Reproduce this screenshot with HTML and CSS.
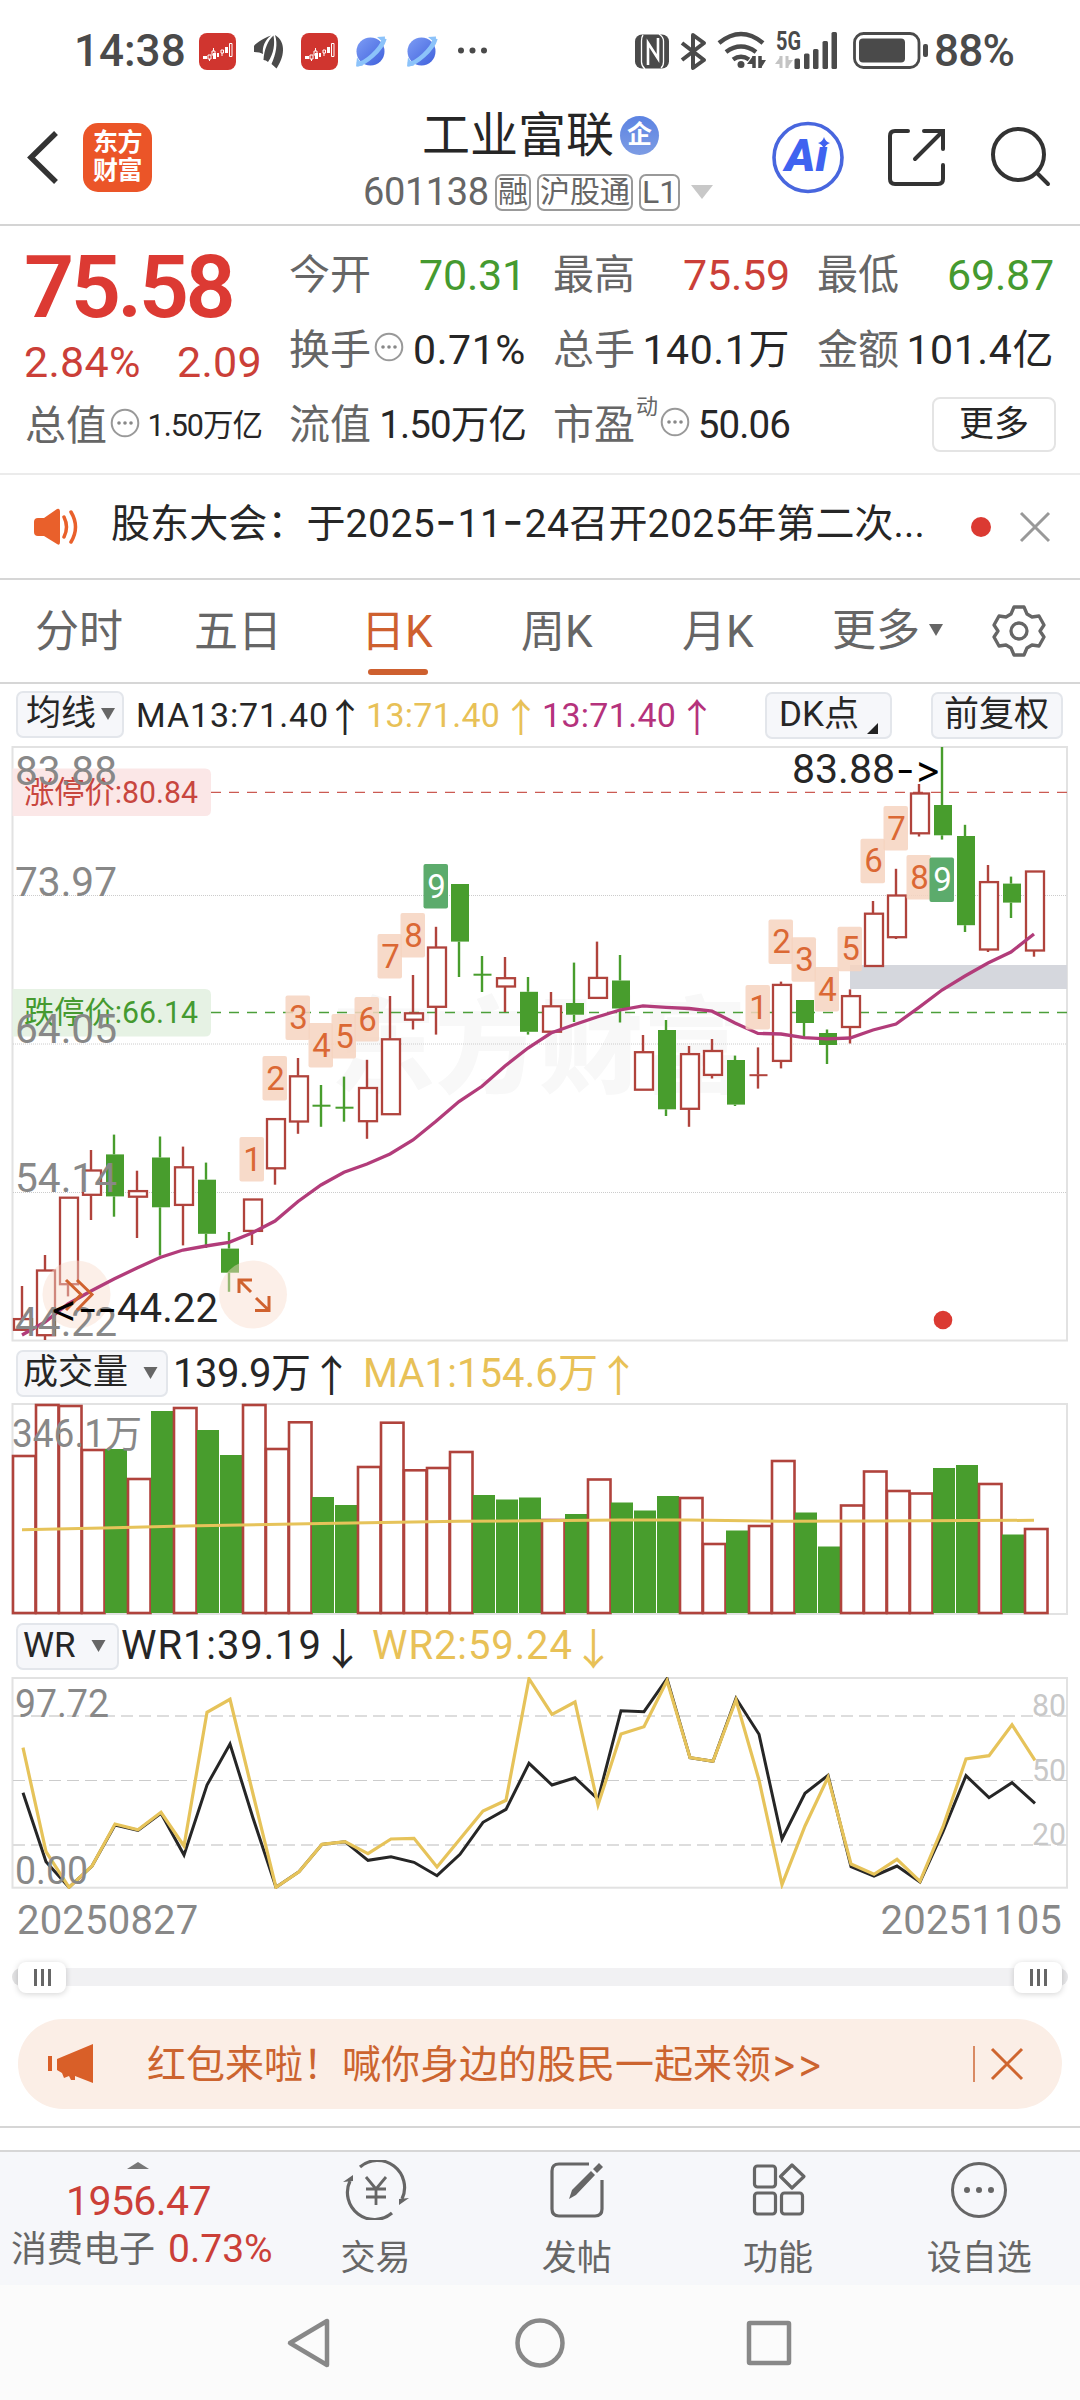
FILE: index.html
```html
<!DOCTYPE html>
<html lang="zh-CN">
<head>
<meta charset="utf-8">
<title>工业富联 601138</title>
<link rel="stylesheet" href="styles.css">
</head>
<body>
<svg width="0" height="0" class="defs">
  <defs>
    <linearGradient id="planet" x1="0" y1="0" x2="1" y2="1"><stop offset="0" stop-color="#7d9df5"/><stop offset="1" stop-color="#3f60dc"/></linearGradient>
    <g id="app-red">
      <rect width="37" height="37" rx="8" fill="#d0352f"/>
      <path d="M4 23h4v3H4zM14 20h3v6h-3zM18 20h2v4h-2zM26 14h3v6h-3z" fill="#fff"/>
      <path d="M9 22h3v4H9zM13 18h3v4h-3zM22 17h2.500v3H22zM30.500 10.500h2.500v13h-2.500zM14.500 15v3M23 20v3M10.500 26v2" fill="none" stroke="#fff" stroke-width="1"/>
    </g>
    <g id="app-planet">
      <circle cx="14.500" cy="15" r="14" fill="url(#planet)"/>
      <path d="M1 28C9 27 25 14 28.500 2" fill="none" stroke="#8cc3fa" stroke-width="4.500"/>
      <path d="M1 21l-1 9 7-1M21 0.500l8-.5-.5 7" fill="#8cc3fa"/>
    </g>
    <g id="more-dots">
      <circle cx="15" cy="15" r="13.300" fill="none" stroke="#999" stroke-width="2"/>
      <circle cx="9" cy="15" r="1.800" fill="#888"/><circle cx="15" cy="15" r="1.800" fill="#888"/><circle cx="21" cy="15" r="1.800" fill="#888"/>
    </g>
  </defs>
</svg>

<div class="status">
  <span class="clock">14:38</span>
  <svg class="status-left" width="300" height="50" viewBox="195 25 300 50">
    <use href="#app-red" x="199" y="33"/>
    <path d="M271 35.500C262 39 255 44 254 46V52Q260 52 263 54C262 47 265 40 271 35.500zM273.500 35.500C268 40 264 50 263.500 60Q266 60 268 62C274 53 275 44 273.500 35.500zM275 35C278 44 276 54 271.500 64L276.500 68.500C284 58 287 42 275 35z"/>
    <use href="#app-red" x="301" y="33"/>
    <use href="#app-planet" x="356" y="36.500"/>
    <use href="#app-planet" x="407" y="36.500"/>
    <circle cx="461" cy="50.500" r="3"/><circle cx="472.500" cy="50.500" r="3"/><circle cx="484" cy="50.500" r="3"/>
  </svg>
  <svg class="status-right" width="300" height="50" viewBox="630 25 300 50">
    <rect x="635" y="34.500" width="34" height="34" rx="7"/>
    <path d="M643 35Q641.500 37 641.500 41V62Q641.500 66 645 69M661 68Q663.500 66 663.500 62V41Q663.500 37 659 34" fill="none" stroke="#fff" stroke-width="1.300"/>
    <path d="M648 65V43L658 58.500V38" fill="none" stroke="#fff" stroke-width="2.600"/>
    <path d="M682 43L704 60L693 68V35L704 43L682 60" fill="none" stroke="#4a4a4a" stroke-width="4" stroke-linejoin="round"/>
    <path d="M719 43Q741 25 763 43M726 52Q741 41 756 52" fill="none" stroke="#4a4a4a" stroke-width="4.500"/>
    <path d="M733 59.500Q741 54 749 59.500" fill="none" stroke="#4a4a4a" stroke-width="4.500"/>
    <circle cx="741" cy="64.500" r="3.500"/>
    <path d="M754 56v12M760 56v12" stroke="#4a4a4a" stroke-width="3.500"/><path d="M747 64l6-8v8zM761 68v-8h5z"/>
    <text x="776" y="50" class="net" textLength="25" lengthAdjust="spacingAndGlyphs">5G</text>
    <path d="M781 56v12M787 56v12" stroke="#c4c4c4" stroke-width="3"/><path d="M775 64l6-8v8zM787 68v-8h6z" fill="#c4c4c4"/>
    <rect x="794.500" y="58.500" width="5.500" height="10.500" rx="1.500"/><rect x="804" y="53.500" width="5.500" height="15.500" rx="1.500"/><rect x="813" y="49" width="5.500" height="20" rx="1.500"/><rect x="822.500" y="41" width="5.500" height="28" rx="1.500"/><rect x="831.500" y="32" width="5.500" height="37" rx="1.500"/>
    <rect x="854.500" y="33.500" width="64.500" height="34" rx="9" fill="none" stroke="#4a4a4a" stroke-width="2.800"/>
    <rect x="859" y="38.500" width="46" height="24" rx="4"/><rect x="923" y="44" width="5" height="13" rx="2"/>
  </svg>
  <span class="battery">88%</span>
</div>

<header class="header">
  <svg class="back" width="34" height="60" viewBox="26 127 34 60"><path d="M56 133L31 157.500L56 182" fill="none" stroke="#333" stroke-width="5.500"/></svg>
  <div class="logo"><span>东方</span><span>财富</span></div>
  <div class="title">
    <div class="name"><b>工业富联</b><i>企</i></div>
    <div class="code"><span>601138</span><em>融</em><em>沪股通</em><em class="level">L1</em><svg width="22" height="14" viewBox="0 0 22 14"><path d="M0 0h22L11 14z" fill="#c8c8c8"/></svg></div>
  </div>
  <svg class="actions" width="290" height="80" viewBox="770 117 290 80">
    <circle cx="808" cy="157.500" r="34" fill="none" stroke="#4866de" stroke-width="3.600"/>
    <path d="M824 137q1.500 5 6 6q-4.500 1.500-6 6q-1.500-4.500-6-6q4.500-1 6-6z" fill="#3f63f0"/>
    <text class="ai" x="785" y="171" textLength="43" lengthAdjust="spacingAndGlyphs">Aı</text>
    <g fill="none" stroke="#333" stroke-width="4" stroke-linecap="round">
      <path d="M908 131H895Q890 131 890 136V179Q890 184 895 184H938Q943 184 943 179V165M924 131H943V149M942 132L915 159"/>
      <circle cx="1018.500" cy="154.500" r="25.500"/><path d="M1037 173L1048 184"/>
    </g>
  </svg>
</header>

<section class="quote">
  <div class="lead">
    <div class="price">75.58</div>
    <div class="change"><span>2.84%</span><span>2.09</span></div>
    <div class="cell total"><label>总值</label><svg class="dots"><use href="#more-dots"/></svg><span class="small">1.50万亿</span></div>
  </div>
  <div class="cells">
    <div class="cell"><label>今开</label><span class="big green">70.31</span></div>
    <div class="cell"><label>最高</label><span class="big red">75.59</span></div>
    <div class="cell"><label>最低</label><span class="big green">69.87</span></div>
    <div class="cell"><label>换手</label><svg class="dots"><use href="#more-dots"/></svg><span>0.71%</span></div>
    <div class="cell"><label>总手</label><span>140.1万</span></div>
    <div class="cell"><label>金额</label><span>101.4亿</span></div>
    <div class="cell"><label>流值</label><span class="mid">1.50万亿</span></div>
    <div class="cell"><label>市盈<sup>动</sup></label><svg class="dots pe"><use href="#more-dots"/></svg><span class="mid">50.06</span></div>
    <div class="cell"><button class="more">更多</button></div>
  </div>
</section>

<section class="news">
  <svg width="48" height="40" viewBox="32 506 48 40"><path d="M34 521Q34 517 38 517H44L57 508Q60 507 60 511V541Q60 545 57 543L44 535H38Q34 535 34 531z" fill="#e9602b"/><path d="M64 516q5 10 0 20M71 511q9 15 0 30" fill="none" stroke="#e9602b" stroke-width="3.500" stroke-linecap="round"/></svg>
  <p>股东大会：于<span class="num">2025<b>-</b>11<b>-</b>24</span>召开<span class="num">2025</span>年第二次...</p>
  <i class="red-dot"></i>
  <svg width="32" height="32" viewBox="0 0 32 32"><path d="M2 2L30 30M30 2L2 30" stroke="#999" stroke-width="3"/></svg>
</section>

<nav class="tabs">
  <a class="t1">分时</a><a class="t2">五日</a><a class="t3 active">日K</a><a class="t4">周K</a><a class="t5">月K</a><a class="t6">更多<svg width="14" height="12" viewBox="0 0 14 12"><path d="M0 0h14L7 12z" fill="#666"/></svg></a>
  <svg class="gear" width="54" height="54" viewBox="-27 -27 54 54"><path d="M-5 -24H5L8 -17L13 -14L20 -15L25 -6L21 0L25 6L20 15L13 14L8 17L5 24H-5L-8 17L-13 14L-20 15L-25 6L-21 0L-25 -6L-20 -15L-13 -14L-8 -17z" fill="none" stroke="#666" stroke-width="3.300" stroke-linejoin="round"/><circle r="8" fill="none" stroke="#666" stroke-width="3.300"/></svg>
</nav>

<div class="bar ma">
  <button class="chip c-ma">均线<svg width="14" height="12" viewBox="0 0 14 12"><path d="M0 0h14L7 12z" fill="#666"/></svg></button>
  <span class="m1">MA13:71.40</span><span class="up">↑</span><span class="m2 gold">13:71.40</span><span class="up gold">↑</span><span class="m2 pink">13:71.40</span><span class="up pink">↑</span>
  <button class="chip c-dk">DK点<svg width="11" height="11" viewBox="0 0 11 11"><path d="M11 0v11H0z" fill="#222"/></svg></button>
  <button class="chip c-fq">前复权</button>
</div>
<svg id="kline" class="chart" width="1080" height="596" viewBox="0 6 1080 596"></svg>

<div class="bar vol">
  <button class="chip c-vol">成交量<svg width="15" height="12" viewBox="0 0 14 12"><path d="M0 0h14L7 12z" fill="#666"/></svg></button>
  <span class="v1">139.9万</span><span class="up">↑</span><span class="v2 gold">MA1:154.6万</span><span class="up gold">↑</span>
</div>
<svg id="volume" class="chart" width="1080" height="213" viewBox="0 63 1080 213"></svg>

<div class="bar wr">
  <button class="chip c-wr">WR<svg width="15" height="12" viewBox="0 0 14 12"><path d="M0 0h14L7 12z" fill="#666"/></svg></button>
  <span class="w1">WR1:39.19</span><span class="up">↓</span><span class="w2 gold">WR2:59.24</span><span class="up gold">↓</span>
</div>
<svg id="wr" class="chart" width="1080" height="212" viewBox="0 67 1080 212"></svg>

<div class="dates"><span>20250827</span><span>20251105</span></div>
<div class="slider"><div class="track"><i class="thumb"><b></b><b></b><b></b></i><i class="thumb end"><b></b><b></b><b></b></i></div></div>

<div class="promo">
  <svg width="46" height="42" viewBox="47 2043 46 42"><path d="M48 2056h4v15h-4zM57 2059L93 2044V2083L75 2076V2080H71L69 2076L64 2078L62 2073L57 2070z" fill="#d95f28"/></svg>
  <p>红包来啦！喊你身边的股民一起来领<span>&gt;&gt;</span></p>
  <i></i>
  <svg width="34" height="34" viewBox="0 0 34 34"><path d="M2 2L32 32M32 2L2 32" stroke="#cf652f" stroke-width="3"/></svg>
</div>

<footer class="dock">
  <div class="index">
    <svg width="22" height="7" viewBox="0 0 22 7"><path d="M0 7L11 0L22 7z" fill="#777"/></svg>
    <strong>1956.47</strong>
    <p>消费电子<span>0.73%</span></p>
  </div>
  <a><svg width="70" height="60" viewBox="-35 -30 70 60"><g fill="none" stroke="#666" stroke-width="3.200"><path d="M-16 -23A27 27 0 0 1 26 9M16 23A27 27 0 0 1 -26 -9"/><path d="M-10 -13L0 -1L10 -13M-10 -1H10M-10 7H10M0 -1V15" stroke-width="2.800"/></g><path d="M-33 -8l10-7v6zM33 8l-10 7V9z" fill="#666"/></svg><span>交易</span></a>
  <a><svg width="70" height="60" viewBox="-35 -30 70 60"><path d="M12 -26H-18Q-25 -26 -25 -19V19Q-25 26 -18 26H18Q25 26 25 19V-10" fill="none" stroke="#666" stroke-width="3.200"/><path d="M-8 9L-5 0L14 -19L18 -15L-1 5zM16 -21L22 -27L26 -23L20 -17z" fill="#666"/></svg><span>发帖</span></a>
  <a><svg width="70" height="60" viewBox="-35 -30 70 60"><g fill="none" stroke="#666" stroke-width="3.200"><rect x="-23.500" y="-24" width="21" height="21" rx="3"/><rect x="-23.500" y="3" width="21" height="21" rx="3"/><rect x="3.500" y="3" width="21" height="21" rx="3"/><path d="M14 -25L26 -13.500L14 -2L2.500 -13.500z" stroke-linejoin="round"/></g></svg><span>功能</span></a>
  <a><svg width="70" height="60" viewBox="-35 -30 70 60"><circle r="26.500" fill="none" stroke="#666" stroke-width="3"/><g fill="#666"><circle cx="-12" r="3"/><circle r="3"/><circle cx="12" r="3"/></g></svg><span>设自选</span></a>
</footer>

<div class="sysnav">
  <svg width="520" height="60" viewBox="280 2313 520 60"><g fill="none" stroke="#888" stroke-width="4.500" stroke-linejoin="round"><path d="M327 2321V2365L290 2343z"/><circle cx="540" cy="2343" r="22.500"/><rect x="749" y="2323" width="40" height="40" rx="1"/></g></svg>
</div>
<script src="charts.js"></script>
</body>
</html>
```
FILE: styles.css
```css
* { box-sizing: border-box; }
html, body { margin: 0; padding: 0; }
body {
  width: 1080px; height: 2400px; overflow: hidden; background: #fff; color: #262626;
  font-family: Roboto, "Noto Sans CJK SC", sans-serif; font-size: 40px;
}
svg { display: block; flex: none; }
.defs { position: absolute; }
p { margin: 0; }
i, em { font-style: normal; }
button { font: inherit; color: inherit; margin: 0; padding: 0; }
.red { color: #cb3f38; }
.green { color: #459a30; }
.gold { color: #e8c157; }
.pink { color: #b5327c; }

.status { height: 100px; display: flex; padding: 0 0 0 74px; color: #4a4a4a; font-weight: 500; font-size: 44px; line-height: 102px; }
.clock { width: 121px; letter-spacing: 0; white-space: nowrap; }
.status svg { margin-top: 25px; fill: #4a4a4a; }
.status-right { margin-left: 135px; }
.battery { margin-left: 4px; letter-spacing: -0.7px; }
.net { font-size: 25px; font-weight: 700; }

.header { height: 126px; border-bottom: 2px solid #d4d4d4; display: flex; padding-left: 26px; }
.back { margin-top: 27px; }
.logo { margin: 23px 0 0 23px; width: 69px; height: 69px; border-radius: 15px; background: #eb5528; color: #fff; font-size: 25px; line-height: 28px; font-weight: 700; text-align: center; padding-top: 6px; letter-spacing: -0.5px; }
.logo span { display: block; }
.title { margin-left: 211px; width: 407px; }
.name { display: flex; height: 71px; padding: 0 0 0 59px; line-height: 71px; }
.name b { font-weight: 400; font-size: 48px; width: 198px; }
.name i { width: 39px; height: 39px; margin-top: 16px; border-radius: 50%; background: linear-gradient(#5c83e2, #7d9ce4); color: #fff; font-size: 25px; font-weight: 700; line-height: 38px; text-align: center; }
.code { display: flex; height: 42px; align-items: center; color: #666; font-size: 38px; }
.code span { width: 132px; letter-spacing: -0.4px; }
.code em { border: 2px solid #999; border-radius: 7px; height: 37px; width: 36px; margin-right: 6px; font-size: 30px; line-height: 32px; text-align: center; white-space: nowrap; }
.code em:nth-of-type(2) { width: 96px; }
.code em.level { width: 41px; margin-right: 11px; font-size: 32px; }
.actions { margin-top: 17px; }
.ai { font: italic 900 44px Roboto, sans-serif; fill: #3f63f0; }

.quote { height: 249px; border-bottom: 2px solid #ebebeb; display: flex; padding: 11px 26px 0 25px; gap: 27px; }
.lead { width: 237px; }
.price { height: 99px; line-height: 99px; font-size: 88px; font-weight: 600; letter-spacing: -3.6px; color: #dc3a33; margin-left: -1px; }
.change { display: flex; justify-content: space-between; height: 52px; line-height: 52px; font-size: 43px; letter-spacing: 0.3px; color: #cb3f38; margin-left: -1px; }
.cells { flex: 1; display: grid; grid-template-columns: repeat(3, 237px); grid-auto-rows: 75px; column-gap: 27px; }
.cell { display: flex; height: 75px; align-items: center; font-size: 41px; line-height: 78px; white-space: nowrap; }
.cell label { color: #666; font-size: 41px; position: relative; }
.cell > span { margin-left: auto; letter-spacing: 0.6px; }
.cell .big { font-size: 43px; letter-spacing: -0.2px; }
.cell .mid { font-size: 38.500px; letter-spacing: -0.9px; }
.cell .small { font-size: 30.500px; letter-spacing: -1px; }
.cell sup { position: absolute; left: 83px; top: 10px; font-size: 22px; line-height: 22px; }
.dots { width: 30px; height: 30px; margin: -5px 0 0 3px; }
.dots.pe { margin-left: 25px; }
.more { margin: 0 -2px 0 auto; width: 124px; height: 55px; border: 2px solid #e4e4e4; border-radius: 8px; background: #fff; font-size: 35px; line-height: 50px; }

.news { height: 105px; border-bottom: 2px solid #d6d6d6; display: flex; align-items: center; padding: 0 29px 0 32px; }
.news p { width: 869px; padding-left: 31px; font-size: 39px; line-height: 60px; margin-top: -6px; white-space: nowrap; letter-spacing: 0.1px; }
.num { letter-spacing: 0.5px; }
.num b { font-family: Inter, sans-serif; font-weight: 400; font-size: 46px; line-height: 0; letter-spacing: 1px; }
.red-dot { width: 20px; height: 20px; border-radius: 50%; background: #db3a32; margin: 0 28px 0 23px; }

.tabs { height: 104px; border-bottom: 2px solid #d6d6d6; display: flex; padding-left: 35px; color: #666; font-size: 44px; line-height: 105px; white-space: nowrap; }
.tabs a { height: 102px; }
.t1 { width: 159px; }
.t2 { width: 167px; }
.t3 { width: 160px; }
.t4 { width: 161px; }
.t5 { width: 150px; }
.t6 { width: 160px; display: flex; align-items: center; }
.t6 svg { margin-left: 9px; margin-top: -3px; }
.tabs .active { color: #ce602f; position: relative; }
.active::after { content: ""; position: absolute; left: 7px; top: 89px; width: 60px; height: 6px; border-radius: 3px; background: #ce602f; }
.gear { margin-top: 24px; }

.bar { display: flex; align-items: center; position: relative; white-space: nowrap; padding-left: 16px; }
.bar span { flex: none; }
.chip { flex: none; height: 47px; border: 2px solid #e3e6eb; border-radius: 7px; background: #f6f7fa; display: flex; align-items: center; font-size: 35px; line-height: 44px; padding-left: 7px; }
.up { font-family: "Noto Sans CJK SC", sans-serif; text-align: center; }
.ma { height: 62px; font-size: 34px; line-height: 59px; }
.ma .up { width: 42px; font-size: 39px; margin-left: -3px; }
.c-ma { width: 108px; padding-left: 8px; margin: -2px 12px 0 0; }
.c-ma svg { margin-left: 5px; }
.m1 { width: 191px; letter-spacing: 0.9px; }
.m2 { width: 137px; letter-spacing: 0.3px; }
.c-dk { width: 127px; margin-left: 47px; padding-left: 12px; }
.c-dk svg { margin: 26px 0 0 8px; }
.c-fq { width: 132px; margin-left: 39px; padding-left: 11px; }
.vol { height: 61px; line-height: 57px; padding-top: 1px; }
.c-vol { width: 152px; margin: 0 5px 0 0; padding-left: 5px; }
.c-vol svg { margin-left: 15px; }
.v1 { width: 139px; letter-spacing: -0.5px; }
.v2 { width: 236px; letter-spacing: 0.1px; }
.vol .up, .wr .up { width: 42px; font-size: 43px; margin-left: -2px; }
.vol .up + .v2 { margin-left: 11px; }
.wr { height: 61px; line-height: 56px; padding-bottom: 1px; }
.c-wr { width: 103px; margin-right: 2px; padding-left: 5px; }
.c-wr svg { margin-left: 15px; }
.w1, .w2 { width: 202px; letter-spacing: 0.9px; }
.w2 { margin-left: 9px; }

.chart text { font-family: Roboto, "Noto Sans CJK SC", sans-serif; }
.axis { font-size: 40px; fill: #888; }
.axis-s { font-size: 38px; fill: #888; }
.level-text { font-size: 32px; fill: #c8c8c8; }
.peak { font-size: 40px; fill: #262626; }
.chart .dash { font-family: Inter, sans-serif; font-size: 38px; font-variant-ligatures: none; font-feature-settings: "calt" 0; }
.limit { font-size: 30.500px; }
.count { font-size: 33px; text-anchor: middle; }
.mark { font-size: 104px; font-weight: 900; fill: #f8f8f8; }

.dates { height: 69px; display: flex; justify-content: space-between; padding: 0 18px 0 17px; line-height: 64px; font-size: 40px; letter-spacing: 0.2px; color: #888; }
.slider { height: 61px; padding: 10px 12px 0; }
.track { height: 18px; border-radius: 9px; background: linear-gradient(90deg, #e2e2e3 30px, #f1f1f3 30px 1030px, #e6e6e8 1030px); display: flex; justify-content: space-between; align-items: center; padding: 0 6px; }
.thumb { width: 48px; height: 31px; border-radius: 8px; background: #fff; box-shadow: 0 1px 6px rgba(0,0,0,.18); display: flex; justify-content: center; align-items: center; gap: 4px; }
.thumb b { width: 3px; height: 17px; background: #666; }
.promo { height: 90px; margin: 0 18px; border-radius: 45px; background: #fbeee6; color: #cc642f; display: flex; align-items: center; padding: 0 38px 0 29px; }
.promo p { margin-left: 54px; width: 828px; font-size: 39px; line-height: 84px; white-space: nowrap; }
.promo p span { font-family: Inter, sans-serif; font-feature-settings: "calt" 0; }
.promo i { width: 2px; height: 36px; background: #d98a63; margin-right: 15px; }

.dock { margin-top: 17px; height: 159px; border-top: 2px solid #d6d6d6; padding-top: 22px; background: linear-gradient(#fff 22px, #d6d6d6 22px 24px, #f6f7fa 24px); display: flex; color: #666; }
.index { width: 275px; padding-top: 12px; }
.index svg { margin-left: 127px; }
.index strong { display: block; font-weight: 400; font-size: 41px; line-height: 64px; padding-left: 66px; color: #cb3f38; letter-spacing: -0.6px; }
.index p { font-size: 36px; line-height: 32px; padding-left: 11px; white-space: nowrap; }
.index span { font-size: 39px; color: #cb3f38; margin-left: 13px; letter-spacing: 0; }
.dock a { width: 201.250px; display: flex; flex-direction: column; align-items: center; font-size: 35px; line-height: 44px; padding-top: 10px; }
.dock a span { margin-top: 17px; }
.sysnav { height: 115px; background: #fbfbfb; padding: 28px 0 0 280px; }
```
FILE: charts.js
```js
// Candle i is centred on X0 + i * STEP. Each row: colour, high, open/close top, bottom, low.
const X0 = 22, STEP = 23, RED = '#b0433c', GREEN = '#489d2d';
const x = i => X0 + i * STEP;

const candles = [
  ['r',546,578.600,590.300,591],['r',515,530,595.700,600],['r',457,457.200,544.700,556.400],['r',410,430,455.300,480],['g',394.600,414.400,456.400,476.700],
  ['r',430.700,450.600,457.200,498],['g',396.500,417.500,467.300,515.600],['r',406.600,426.800,465.400,505.400],['g',422.600,439.700,493.800,508],['g',492,508.600,532.700,551.800],
  ['r',459,459,491.400,505],['r',378.600,378.600,428.800,444.700],['r',318,335.800,382,393.800],['g',345,365,366,386.800],['g',336.600,367,368,381.700],
  ['r',319.800,347.500,381.700,398.800],['r',256,298.800,374.700,375],['r',235,272.800,280.200,289.500],['r',186.800,207,267.300,294.600],['g',144,144,201.600,237],
  ['g',216,234,235,252],['r',217,237.700,247,272],['g',237,251.800,291.800,294.600],['r',252,265.800,292.200,292.200],['g',222.600,263,274.700,282],
  ['r',201.600,237.400,258.400,259],['g',215,240.500,268.500,282.500],['r',295,311.700,350.200,350],['g',280,290,369.300,376],['r',306,313.600,369.300,386.800],
  ['r',299,310.500,335.400,338.500],['g',315.600,320,364.600,366],['r',307.400,334.500,335,348.600],['r',241.600,244.400,321.400,328.400],['g',260,260,283,297],
  ['g',289.500,293,305,324],['r',249.400,255.600,287.500,303.500],['r',161,173.200,226.500,226.500],['r',128.800,155,197.700,199],['r',44,53,93.800,96.500],
  ['g',7,65,95.300,99.600],['g',84.800,96,185.200,192],['r',125,141.600,210,212],['g',136.600,143.600,162.600,178],['r',131,131,211,216.700]
];
const ma = [595,582,564,551,539,528,517.500,510,506,502.300,493,481,461.500,445,432.300,424,414,400,381.300,361.500,346.300,326,308,293,284.800,277,270,265.800,267.300,268.500,271.200,283,293.400,294,297.700,298.800,298,290,284,267.300,250,236,223,212,194];
const counts = [[10,397,1],[11,316,2],[12,255.600,3],[13,283,4],[14,274,5],[15,257,6],[16,194,7],[17,173,8],[18,124,9],[32,245,1],[33,179.400,2],[34,197.300,3],[35,227,4],[36,186.800,5],[37,98.800,6],[38,66,7],[39,115,8],[40,117.500,9]];

const line = (pts, color, w) => `<polyline points="${pts.map((y, i) => x(i) + ',' + y).join(' ')}" fill="none" stroke="${color}" stroke-width="${w}"/>`;
const frame = (top, bottom) => `<rect x="12.500" y="${top}" width="1054.500" height="${bottom - top}" fill="none" stroke="#e2e2e2" stroke-width="2"/>`;
const rule = (y, color, dash, w = 1, from = 13) => `<line x1="${from}" x2="1067" y1="${y}" y2="${y}" stroke="${color}" stroke-width="${w}" stroke-dasharray="${dash}"/>`;
const text = (cls, tx, y, s, len, extra = '') => `<text class="${cls}" x="${tx}" y="${y}" ${len ? `textLength="${len}" lengthAdjust="spacingAndGlyphs"` : ''} ${extra}>${s}</text>`;

let k = frame(7, 600.500);
k += text('mark', 331, 345, '东方财富', 416);
k += [155.500, 304, 452.500].map(y => rule(y, '#cccccc', '1 1')).join('');
k += rule(52.300, '#cb5a52', '10 8', 1.300, 211) + rule(272.500, '#4c9f3a', '10 8', 1.300, 211);
k += '<rect x="850" y="225" width="217" height="24" fill="#d5d7dd"/>';
candles.forEach(([c, hi, a, b, lo], i) => {
  const cx = x(i), col = c === 'r' ? RED : GREEN;
  if (hi < a) k += `<line x1="${cx}" x2="${cx}" y1="${hi}" y2="${a}" stroke="${col}" stroke-width="2.400"/>`;
  if (lo > b) k += `<line x1="${cx}" x2="${cx}" y1="${b}" y2="${lo}" stroke="${col}" stroke-width="2.400"/>`;
  if (b - a < 1.500) k += `<rect x="${cx - 8.500}" y="${a - .3}" width="18" height="2" fill="${col}"/>`;
  else if (c === 'g') k += `<rect x="${cx - 8}" y="${a}" width="18" height="${b - a}" fill="${col}"/>`;
  else k += `<rect x="${cx - 8}" y="${a + .5}" width="18" height="${b - a - 1}" fill="#fff" stroke="${col}" stroke-width="2.300"/>`;
});
k += '<circle cx="76.500" cy="554.500" r="34" fill="#f8dccb" opacity=".45"/><circle cx="253" cy="554.500" r="34" fill="#f8dccb" opacity=".45"/>';
k += line(ma, '#b23c7a', 3.300);
counts.forEach(([i, y, n]) => {
  k += `<rect x="${x(i) - 12.500}" y="${y}" width="24.500" height="44.500" rx="2" fill="${n === 9 ? '#5cab6c' : '#f6d3bf'}" opacity="${n === 9 ? 1 : .85}"/>`;
  k += text('count', x(i) + .5, y + 33.500, n, 0, `fill="${n === 9 ? '#fff' : '#db6834'}"`);
});
k += '<path d="M12.500 28.400H205q6 0 6 6V70q0 6-6 6H12.500z" fill="#fbe7e7"/><path d="M12.500 249H205q6 0 6 6V290.500q0 6-6 6H12.500z" fill="#e6f2e4"/>';
k += text('limit', 24, 63, '涨停价:80.84', 174, 'fill="#c8463e"') + text('limit', 24, 283, '跌停价:66.14', 174, 'fill="#459a30"');
[['83.88', 44.500], ['73.97', 155.500], ['64.05', 303], ['54.14', 452], ['44.22', 595.700]].forEach(([s, y]) => k += text('axis', 15, y, s, 102));
k += '<g fill="none" stroke="#d0622f" stroke-width="3"><path d="M66 540L81 554.500L66 570M77 540L92 554.500L77 570"/><path d="M251 552L239 540M239 553V540H252M256 558L268.500 570M269 556V570.500H255"/></g>';
k += text('dash', 50, 582, '&lt;--', 67) + text('peak', 117, 582, '44.22', 101);
k += text('peak', 792, 43, '83.88', 103) + text('dash', 896, 43, '-&gt;', 45);
k += '<circle cx="943" cy="580" r="9.300" fill="#db3a32"/>';
document.getElementById('kline').innerHTML = k;

const volumes = 'r116 r65 r66 r110 g109 r139 g71 r68 g90 g115 r65 r109 r82.3 g157 g165 r127 r82.7 r130.3 r128 r112 g155 g159.500 g157.500 r180 g174 r139.5 g162.500 g170.500 g156 r158 r204 g190.500 r186 r121 g172.500 g206.500 r165.500 r131.500 r151 r153.500 g128 g125 r144 g194.500 r189'.split(' ');
let v = frame(64, 274);
volumes.forEach((s, i) => {
  const top = +s.slice(1), left = x(i) - 9;
  v += s[0] === 'g' ? `<rect x="${left}" y="${top}" width="22" height="${273 - top}" fill="${GREEN}"/>`
    : `<rect x="${left}" y="${top}" width="22.500" height="${273 - top}" fill="#fff" stroke="${RED}" stroke-width="2.600"/>`;
});
v += `<polyline points="22,189.700 114,187.800 183,186 321,183.500 459,181.300 620,180 689,180 781,181.300 873,181 1034,180.300" fill="none" stroke="#e6c35a" stroke-width="3"/>`;
v += text('axis-s', 12, 107, '346.1万', 130);
document.getElementById('volume').innerHTML = v;

const wr1 = [182.700,251.700,277.300,256,215,220.300,203.300,245,175,134,208,277.300,261.700,234.300,231.700,250.300,246.700,252.300,265.700,244.300,212.300,199.300,153.300,175,167.700,189.300,100.700,101.700,68.700,147.700,151.300,88.300,124.300,229,183.300,165.300,256.700,266,256,272,221.700,165.700,187.700,172.700,193.300];
const wr2 = [137.700,241.700,277.300,256,214,219.700,202.300,236,102.300,89.300,184,277.300,261.700,234.300,231.700,243.700,229,228.300,257,229,201,190.300,68.700,104.300,92,195,124,116.700,70.700,147.700,151.300,90,170,274.700,216,167.300,254,264.300,249.300,271.300,216.700,149,145.700,114.700,150.300];
let w = frame(68, 277.700) + rule(106, '#dddddd', '12 6', 2) + rule(170.500, '#cccccc', '12 6') + rule(235, '#dddddd', '12 6', 2);
w += `<g transform="translate(1 0)">${line(wr1, '#262626', 3)}${line(wr2, '#e6c35a', 3.200)}</g>`;
w += text('axis-s', 15, 106.700, '97.72', 94) + text('axis-s', 15, 273.700, '0.00', 73);
w += text('level-text', 1032, 106, '80', 34) + text('level-text', 1032, 170.500, '50', 34) + text('level-text', 1032, 235, '20', 34);
document.getElementById('wr').innerHTML = w;
```
